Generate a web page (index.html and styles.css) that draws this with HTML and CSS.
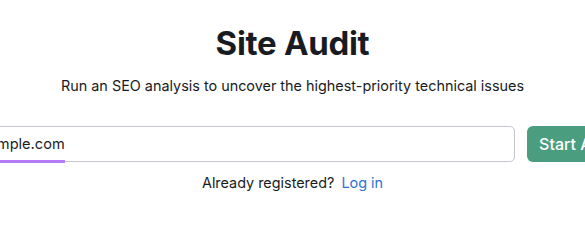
FILE: index.html
```html
<!DOCTYPE html>
<html lang="en">
<head>
<meta charset="utf-8">
<title>Site Audit</title>
<link rel="stylesheet" href="styles.css">
</head>
<body>
<main class="hero">
  <h1 class="title">Site Audit</h1>
  <p class="subtitle">Run an SEO analysis to uncover the highest-priority technical issues</p>
  <form class="audit-form">
    <div class="field"><span class="field-text">example.com</span></div>
    <button type="button" class="start-btn">Start Audit</button>
  </form>
  <p class="login">Already registered? <a class="login-link" href="#">Log in</a></p>
</main>
</body>
</html>
```
FILE: styles.css
```css
html, body {
  margin: 0;
  padding: 0;
  background: #ffffff;
  overflow: hidden;
}
body {
  font-family: "Inter", "Noto Sans", sans-serif;
  color: #191b23;
}
.hero {
  display: flex;
  flex-direction: column;
  align-items: center;
  padding-top: 24px;
}
.title {
  margin: 0;
  font-size: 33px;
  line-height: 38px;
  font-weight: 700;
  letter-spacing: -0.3px;
}
.subtitle {
  margin: 14px 0 0;
  font-size: 14.4px;
  line-height: 20px;
  white-space: nowrap;
}
.audit-form {
  margin-top: 30px;
  width: 680px;
  flex-shrink: 0;
  display: flex;
  gap: 12px;
}
.field {
  flex: 1;
  height: 36px;
  box-sizing: border-box;
  border: 1px solid #c4c7cf;
  border-radius: 5px;
  display: flex;
  align-items: center;
  padding-left: 19px;
  font-size: 14.6px;
  color: #191b23;
}
.field-text {
  position: relative;
}
.field-text::after {
  content: "";
  position: absolute;
  left: -20px;
  right: 0;
  bottom: -10px;
  height: 3px;
  background: #b47cf6;
}
.start-btn {
  flex: 0 0 auto;
  height: 36px;
  padding: 0 12px;
  border: none;
  border-radius: 6px;
  background: #4a9d7f;
  color: #ffffff;
  font-family: inherit;
  font-size: 16px;
  font-weight: 500;
}
.login {
  margin: 11px 0 0;
  font-size: 14.4px;
  line-height: 20px;
}
.login-link {
  color: #2c73d2;
  text-decoration: none;
  margin-left: 3px;
}
```
